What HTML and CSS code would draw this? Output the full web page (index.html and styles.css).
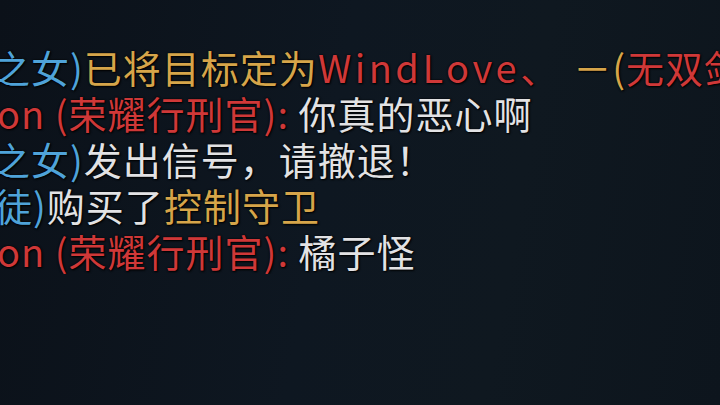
FILE: index.html
```html
<!DOCTYPE html>
<html lang="zh">
<head>
<meta charset="utf-8">
<link rel="stylesheet" href="styles.css">
</head>
<body>
<div class="chat">
  <div class="line l1"><span class="blue">之女)</span><span class="gold">已将目标定为</span><span class="red latin">WindLove</span><span class="red">、</span><span class="gold dash">－(</span><span class="red">无双剑姬)</span></div>
  <div class="line l2"><span class="red">on (荣耀行刑官):</span><span class="white"> 你真的恶心啊</span></div>
  <div class="line l3"><span class="blue">之女)</span><span class="white">发出信号，请撤退！</span></div>
  <div class="line l4"><span class="blue">徒)</span><span class="white">购买了</span><span class="gold">控制守卫</span></div>
  <div class="line l5"><span class="red">on (荣耀行刑官):</span><span class="white"> 橘子怪</span></div>
</div>
</body>
</html>
```
FILE: styles.css
```css
html, body {
  margin: 0;
  padding: 0;
  width: 720px;
  height: 405px;
  overflow: hidden;
}
body {
  background: linear-gradient(100deg, #0b1119 0%, #0e1721 45%, #0f1820 70%, #0d151d 100%);
  font-family: "Noto Sans CJK SC", "Noto Sans", sans-serif;
}
.chat {
  padding-top: 44px;
  display: flex;
  flex-direction: column;
  overflow: hidden;
}
.line {
  font-size: 38px;
  line-height: 46px;
  height: 46px;
  white-space: nowrap;
  letter-spacing: 1px;
  text-shadow: 0 0 2px #000, 1px 1px 2px #000;
}
.latin {
  letter-spacing: 3.5px;
}
.dash { margin-left: 14px; }
.l1 { margin-left: -8px; }
.l2 { margin-left: -3px; }
.l3 { margin-left: -8px; }
.l4 { margin-left: -6px; }
.l5 { margin-left: -3px; }
.blue { color: #4fa3d9; }
.gold { color: #d6a54a; }
.red { color: #cf3838; }
.white { color: #e2e2e4; }
```
